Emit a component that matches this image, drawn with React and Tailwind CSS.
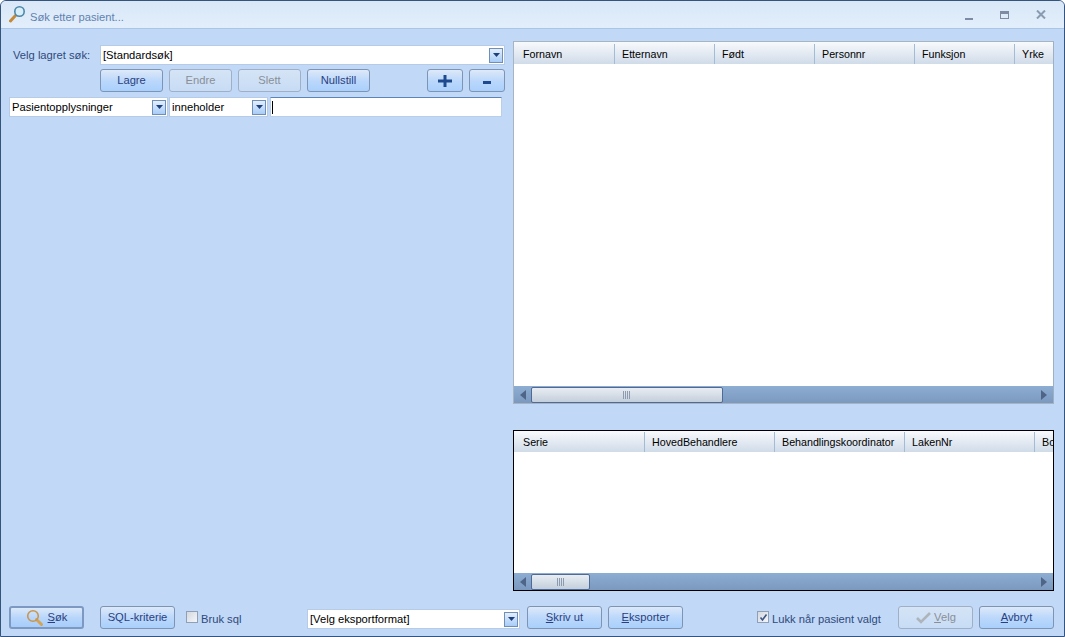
import React from 'react';

const Arrow = () => (
  <svg width="7" height="4" viewBox="0 0 7 4"><path d="M0 0h7L3.5 4z" fill="#1f3f7a" /></svg>
);

const DropButton = () => (
  <span className="flex h-[15px] w-[14px] shrink-0 items-center justify-center border border-[#6f8fb8] bg-gradient-to-b from-[#e3eefb] to-[#a9cdf8]">
    <Arrow />
  </span>
);

const Combo = ({ text, className }) => (
  <div className={`flex h-[20px] items-center justify-between border border-[#b5cbe6] bg-white pl-[2px] pr-[1px] text-black ${className}`}>
    <span>{text}</span>
    <DropButton />
  </div>
);

const Btn = ({ children, disabled, className = 'w-[63px]', dark }) => (
  <button
    className={`flex h-[23px] shrink-0 items-center justify-center rounded-[3px] border bg-gradient-to-b ${
      disabled
        ? 'border-[#9fb0c6] from-[#d5e4f6] to-[#c7dcf5] text-[#8a8f97]'
        : dark
        ? 'border-2 border-[#7d99c2] from-[#dbe9fa] via-[#b9d6fa] to-[#a5cdfb] text-[#2a3f80]'
        : 'border-[#7d94b5] from-[#dde9f8] via-[#bcd8fb] to-[#a9d0fc] text-[#2a3f80]'
    } ${className}`}
  >
    {children}
  </button>
);

const Check = ({ checked }) => (
  <span className="flex h-[12px] w-[12px] shrink-0 items-center justify-center border border-[#8e9fb6] bg-gradient-to-br from-[#d4d9e0] to-[#f4f6f8]">
    {checked && (
      <svg width="9" height="9" viewBox="0 0 9 9"><path d="M1.5 4.5l2 2.5 4-5.5" fill="none" stroke="#3d5688" strokeWidth="1.6" /></svg>
    )}
  </span>
);

const ScrollArrow = ({ dir }) => (
  <svg width="6" height="10" viewBox="0 0 6 10" className="shrink-0">
    <path d={dir === 'left' ? 'M6 0v10L0 5z' : 'M0 0v10l6-5z'} fill="#4f6587" />
  </svg>
);

const Scrollbar = ({ thumb }) => (
  <div className="flex h-[17px] shrink-0 items-center bg-gradient-to-b from-[#8eadd2] to-[#7b99bf] px-[6px]">
    <ScrollArrow dir="left" />
    <div className={`ml-[5px] flex h-[16px] items-center justify-center rounded-[2px] border border-[#4f6a96] bg-gradient-to-b from-[#e9edf2] to-[#c3cfdc] ${thumb}`}>
      <svg width="8" height="8" viewBox="0 0 8 8"><path d="M.5 0v8M2.5 0v8M4.5 0v8M6.5 0v8" stroke="#8d9bb0" /></svg>
    </div>
    <div className="flex-1" />
    <ScrollArrow dir="right" />
  </div>
);

const GridHeader = ({ cols, height }) => (
  <div className={`flex shrink-0 overflow-hidden bg-gradient-to-b from-[#f8fafc] to-[#d0dbe9] text-[10.7px] ${height}`}>
    {cols.map((c) => (
      <div
        key={c.name}
        className="flex shrink-0 items-center overflow-hidden whitespace-nowrap border-r border-[#a3bcd6] pl-[7px] text-black first:pl-[9px]"
        style={{ width: c.w }}
      >
        {c.name}
      </div>
    ))}
  </div>
);

const cols1 = [
  { name: 'Fornavn', w: 101 },
  { name: 'Etternavn', w: 100 },
  { name: 'Født', w: 100 },
  { name: 'Personnr', w: 100 },
  { name: 'Funksjon', w: 100 },
  { name: 'Yrke', w: 100 },
];

const cols2 = [
  { name: 'Serie', w: 131 },
  { name: 'HovedBehandlere', w: 130 },
  { name: 'Behandlingskoordinator', w: 130 },
  { name: 'LakenNr', w: 130 },
  { name: 'Bo', w: 100 },
];

export default function App() {
  return (
    <div className="flex h-[637px] w-[1065px] flex-col overflow-hidden rounded-t-[6px] border border-[#34547e] bg-[#c1d8f6] font-['Liberation_Sans',sans-serif] text-[11.2px]">
      {/* Title bar */}
      <div className="flex h-[28px] shrink-0 items-center border-b border-[#a9c5e8] bg-gradient-to-b from-[#d9e7f7] to-[#e2eefb] pl-[8px] pr-[18px]">
        <svg width="17" height="19" viewBox="0 0 17 19" className="shrink-0">
          <path d="M6.5 10.5L1.5 16" stroke="#c48a3a" strokeWidth="3" strokeLinecap="round" />
          <circle cx="10.5" cy="6.5" r="4.7" fill="#d7edf8" stroke="#4d87a8" strokeWidth="1.6" />
        </svg>
        <span className="ml-[4px] mt-[5px] text-[#5f82b0]">Søk etter pasient...</span>
        <div className="flex-1" />
        <div className="flex items-center gap-[27px]">
          <span className="mt-[9px] h-[2px] w-[8px] bg-[#7d8ca3]" />
          <span className="h-[8px] w-[9px] border border-[#7d8ca3] border-t-[3px]" />
          <svg width="10" height="9" viewBox="0 0 10 9"><path d="M1 .5l8 8M9 .5l-8 8" stroke="#8a9ab0" strokeWidth="2" /></svg>
        </div>
      </div>

      {/* Main */}
      <div className="flex min-h-0 flex-1">
        <div className="w-[512px] shrink-0 pt-[16px]">
          <div className="flex items-center">
            <span className="ml-[12px] w-[87px] text-[#2f4a7c]">Velg lagret søk:</span>
            <Combo text="[Standardsøk]" className="w-[405px]" />
          </div>
          <div className="mt-[4px] flex pl-[99px]">
            <Btn>Lagre</Btn>
            <Btn disabled className="ml-[6px] w-[63px]">Endre</Btn>
            <Btn disabled className="ml-[6px] w-[63px]">Slett</Btn>
            <Btn className="ml-[6px] w-[63px]">Nullstill</Btn>
            <Btn className="ml-[57px] w-[36px]">
              <svg width="14" height="12" viewBox="0 0 14 12"><path d="M0 6h14M7 0v12" stroke="#1d4a8e" strokeWidth="3" /></svg>
            </Btn>
            <Btn className="ml-[6px] w-[36px]">
              <span className="mt-[4px] h-[3px] w-[8px] bg-[#1d4a8e]" />
            </Btn>
          </div>
          <div className="mt-[5px] flex pl-[8px]">
            <Combo text="Pasientopplysninger" className="w-[159px]" />
            <Combo text="inneholder" className="ml-[1px] w-[99px]" />
            <div className="ml-[2px] flex h-[20px] w-[232px] items-center border border-[#b7cfe9] border-t-[#5d84b5] bg-white pl-[1px]">
              <span className="h-[13px] w-px bg-black" />
            </div>
          </div>
        </div>

        <div className="flex w-[541px] shrink-0 flex-col pt-[12px]">
          <div className="flex h-[363px] flex-col overflow-hidden border border-[#a9b4c2] border-r-[#9fb0c4] bg-white">
            <GridHeader cols={cols1} height="h-[22px] pt-[2px]" />
            <div className="flex-1" />
            <Scrollbar thumb="w-[192px]" />
          </div>
          <div className="mt-[26px] flex h-[161px] flex-col overflow-hidden border border-black bg-white">
            <GridHeader cols={cols2} height="h-[21px] pt-px" />
            <div className="flex-1" />
            <Scrollbar thumb="w-[59px]" />
          </div>
        </div>
      </div>

      {/* Footer */}
      <div className="flex h-[45px] shrink-0 items-start pl-[8px] pt-[15px]">
        <Btn dark className="w-[75px]">
          <svg width="18" height="18" viewBox="0 0 18 18" className="mr-[4px] shrink-0">
            <path d="M10.5 10.5L15.5 15.5" stroke="#d3a357" strokeWidth="3" strokeLinecap="round" />
            <circle cx="7" cy="7" r="5.3" fill="none" stroke="#c8964f" strokeWidth="1.6" />
          </svg>
          <span><u>S</u>øk</span>
        </Btn>
        <Btn className="ml-[16px] w-[75px]">SQL-kriterie</Btn>
        <span className="ml-[11px] mt-[5px]"><Check /></span>
        <span className="ml-[3px] mt-[5px] w-[106px] text-[#2f4a7c]">Bruk sql</span>
        <Combo text="[Velg eksportformat]" className="mt-[3px] w-[213px]" />
        <Btn className="ml-[7px] w-[75px]"><span><u>S</u>kriv ut</span></Btn>
        <Btn className="ml-[6px] w-[75px]"><span><u>E</u>ksporter</span></Btn>
        <span className="ml-[74px] mt-[5px]"><Check checked /></span>
        <span className="ml-[3px] mt-[5px] w-[126px] text-[#2f4a7c]">Lukk når pasient valgt</span>
        <Btn disabled className="w-[75px]">
          <svg width="17" height="13" viewBox="0 0 17 13" className="mr-[2px]"><path d="M2 7l4 4 9-9" fill="none" stroke="#aeb4bb" strokeWidth="2.6" /></svg>
          <span><u>V</u>elg</span>
        </Btn>
        <Btn className="ml-[6px] w-[75px]"><span><u>A</u>vbryt</span></Btn>
      </div>
    </div>
  );
}
